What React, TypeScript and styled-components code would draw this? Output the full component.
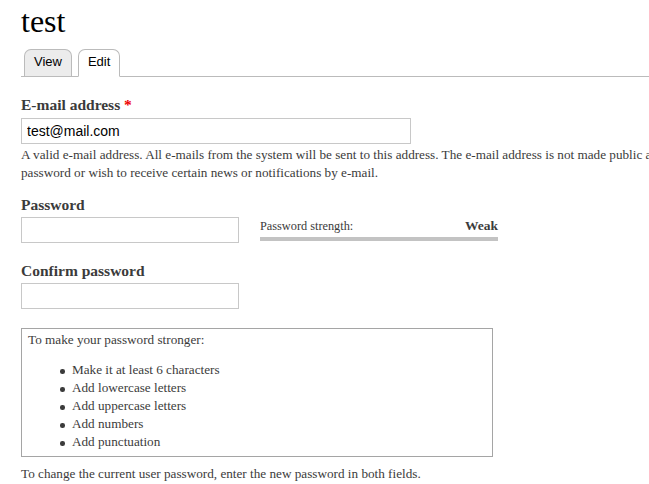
import React from "react";
import styled, { createGlobalStyle } from "styled-components";

const Global = createGlobalStyle`
  html, body { margin: 0; padding: 0; background: #fff; overflow: hidden; }
  body { font-family: "Liberation Serif", Georgia, serif; color: #3b3b3b; }
`;

const Page = styled.div`
  width: 649px;
  height: 484px;
  padding-left: 21px;
  box-sizing: border-box;
  overflow: hidden;
`;

const Title = styled.h1`
  margin: 0;
  padding-top: 3px;
  height: 46px;
  font-family: "Liberation Serif", Georgia, serif;
  font-weight: normal;
  font-size: 32px;
  line-height: 36px;
  color: #000;
`;

const Tabs = styled.ul`
  display: flex;
  align-items: flex-end;
  gap: 6px;
  margin: 0;
  padding: 0 0 0 3px;
  list-style: none;
  border-bottom: 1px solid #bbb;
  height: 27px;
`;

const Tab = styled.li<{ $active?: boolean }>`
  box-sizing: border-box;
  height: ${(p) => (p.$active ? "28px" : "27px")};
  margin-bottom: ${(p) => (p.$active ? "-1px" : "0")};
  padding: 0 9px;
  border: 1px solid #bbb;
  border-bottom: ${(p) => (p.$active ? "1px solid #fff" : "none")};
  border-radius: 7px 7px 0 0;
  background: ${(p) => (p.$active ? "#fff" : "#ececec")};
  font-family: "Liberation Sans", Arial, sans-serif;
  font-size: 13px;
  line-height: 24px;
  color: #000;
`;

const Form = styled.form`
  display: flex;
  flex-direction: column;
  padding-top: 19px;
`;

const Field = styled.div<{ $mt?: number }>`
  display: flex;
  flex-direction: column;
  margin-top: ${(p) => p.$mt ?? 0}px;
`;

const Label = styled.label<{ $mb?: number }>`
  font-family: "Liberation Serif", Georgia, serif;
  font-weight: bold;
  font-size: 15.5px;
  line-height: 18px;
  color: #3b3b3b;
  margin-bottom: ${(p) => p.$mb ?? 3}px;
`;

const Required = styled.span`
  color: #e00;
`;

const TextInput = styled.input<{ $w: number }>`
  box-sizing: border-box;
  width: ${(p) => p.$w}px;
  height: 26px;
  margin: 0;
  padding: 0 5px;
  border: 1px solid #c8c8c8;
  font-family: "Liberation Sans", Arial, sans-serif;
  font-size: 14px;
  color: #000;
  outline: none;
`;

const Description = styled.div`
  font-size: 13.2px;
  line-height: 18px;
  margin-top: 2px;
  color: #3b3b3b;
`;

const DescriptionLine = styled.div`
  white-space: nowrap;
`;

const PasswordRow = styled.div`
  display: flex;
  align-items: flex-start;
  gap: 21px;
`;

const Strength = styled.div`
  width: 238px;
  padding-top: 2px;
  display: flex;
  flex-direction: column;
`;

const StrengthText = styled.div`
  display: flex;
  justify-content: space-between;
  align-items: baseline;
  font-size: 12.3px;
  line-height: 14px;
`;

const StrengthValue = styled.strong`
  font-weight: bold;
  font-size: 13.5px;
  color: #3b3b3b;
`;

const StrengthBar = styled.div`
  margin-top: 4px;
  height: 4px;
  background: #c3c3c3;
`;

const Suggestions = styled.div`
  box-sizing: border-box;
  width: 472px;
  margin-top: 19px;
  border: 1px solid #a5a5a5;
  padding: 2px 6px 5px;
  font-size: 13.2px;
  line-height: 18px;
`;

const List = styled.ul`
  margin: 12px 0 0;
  padding-left: 44px;
  list-style: none;
`;

const Item = styled.li`
  position: relative;
  &::before {
    content: "";
    position: absolute;
    left: -12px;
    top: 8px;
    width: 4.5px;
    height: 4.5px;
    border-radius: 50%;
    background: #3b3b3b;
  }
`;

const Note = styled.div`
  margin-top: 8px;
  font-size: 13.2px;
  line-height: 18px;
  white-space: nowrap;
`;

export default function App() {
  return (
    <>
      <Global />
      <Page>
        <Title>test</Title>
        <Tabs>
          <Tab>View</Tab>
          <Tab $active>Edit</Tab>
        </Tabs>
        <Form onSubmit={(e) => e.preventDefault()}>
          <Field>
            <Label $mb={4}>
              E-mail address <Required>*</Required>
            </Label>
            <TextInput $w={390} defaultValue="test@mail.com" />
            <Description>
              <DescriptionLine>
                A valid e-mail address. All e-mails from the system will be sent to this address. The e-mail address is not made public and will only be used if you wish to receive a new
              </DescriptionLine>
              <DescriptionLine>
                password or wish to receive certain news or notifications by e-mail.
              </DescriptionLine>
            </Description>
          </Field>
          <Field $mt={14}>
            <Label>Password</Label>
            <PasswordRow>
              <TextInput $w={218} type="password" />
              <Strength>
                <StrengthText>
                  <span>Password strength:</span>
                  <StrengthValue>Weak</StrengthValue>
                </StrengthText>
                <StrengthBar />
              </Strength>
            </PasswordRow>
          </Field>
          <Field $mt={19}>
            <Label>Confirm password</Label>
            <TextInput $w={218} type="password" />
          </Field>
          <Suggestions>
            To make your password stronger:
            <List>
              <Item>Make it at least 6 characters</Item>
              <Item>Add lowercase letters</Item>
              <Item>Add uppercase letters</Item>
              <Item>Add numbers</Item>
              <Item>Add punctuation</Item>
            </List>
          </Suggestions>
          <Note>To change the current user password, enter the new password in both fields.</Note>
        </Form>
      </Page>
    </>
  );
}
